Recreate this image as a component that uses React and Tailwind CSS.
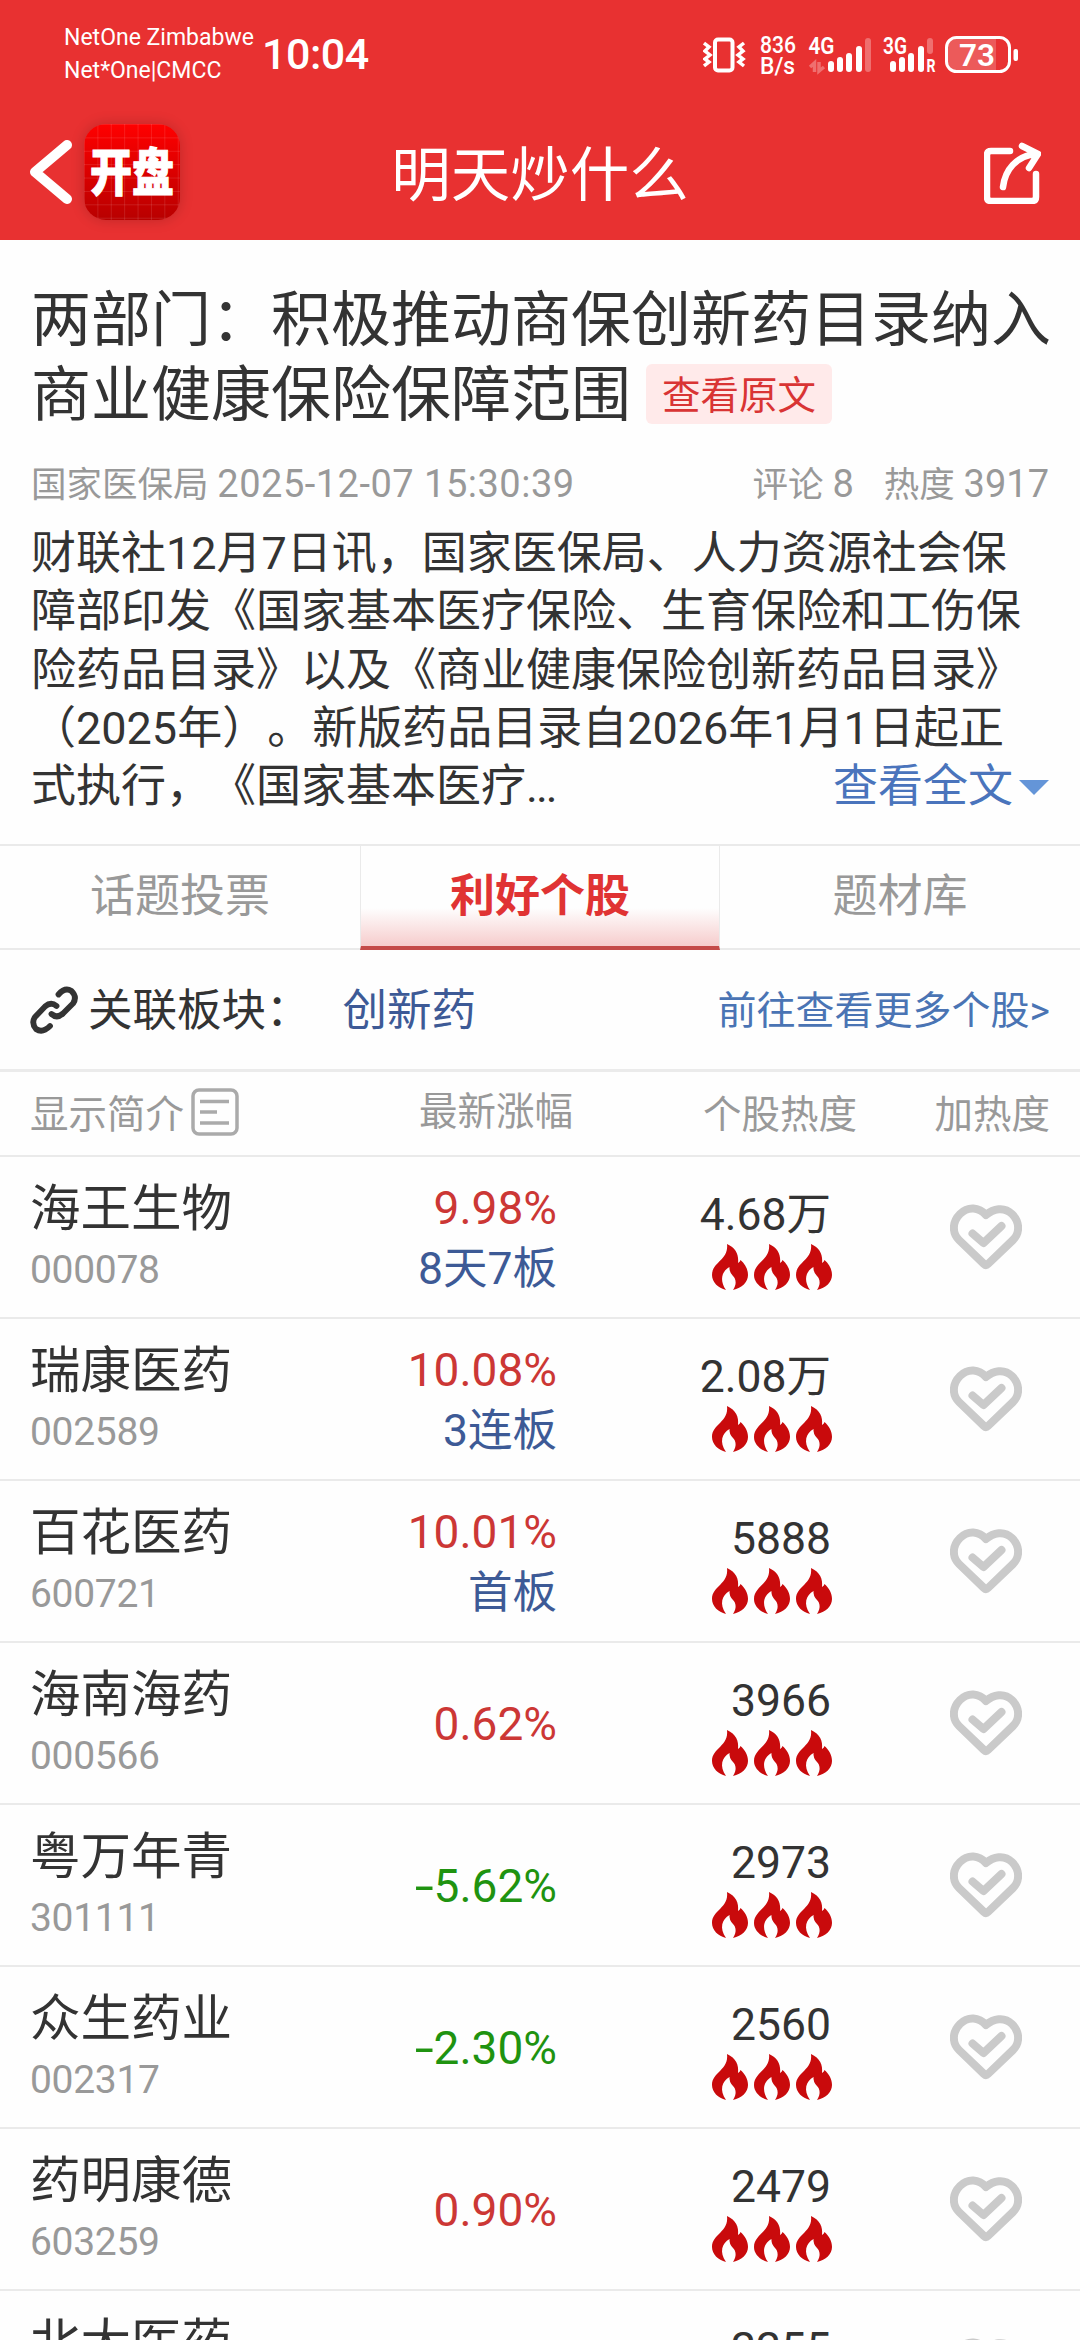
import clsx from "clsx";

const stocks = [
  { name: "海王生物", code: "000078", change: "9.98%", board: "8天7板", heat: "4.68万" },
  { name: "瑞康医药", code: "002589", change: "10.08%", board: "3连板", heat: "2.08万" },
  { name: "百花医药", code: "600721", change: "10.01%", board: "首板", heat: "5888" },
  { name: "海南海药", code: "000566", change: "0.62%", heat: "3966" },
  { name: "粤万年青", code: "301111", change: "-5.62%", heat: "2973" },
  { name: "众生药业", code: "002317", change: "-2.30%", heat: "2560" },
  { name: "药明康德", code: "603259", change: "0.90%", heat: "2479" },
  { name: "北大医药", code: "000788", change: "", heat: "2255" },
];

const summary = [
  "财联社12月7日讯，国家医保局、人力资源社会保",
  "障部印发《国家基本医疗保险、生育保险和工伤保",
  "险药品目录》以及《商业健康保险创新药品目录》",
  "（2025年）。新版药品目录自2026年1月1日起正",
];

const tabs = ["话题投票", "利好个股", "题材库"];

const Flame = () => (
  <svg viewBox="0 0 36 46" className="h-[46px] w-9" fill="#c90a0c">
    <path d="M15 0C24 4 27 11 26 19Q28 18 28.500 16C33 20 36 25 36 31C36 38 30 44 21 46C25 40 24 35 21 32Q17 28 17.500 23C10 27 7 36 14 46C6 44 0 38 0 31C0 18 17 16 15 0Z" />
  </svg>
);

const Heart = () => (
  <svg viewBox="0 0 72 66" className="h-[66px] w-[72px]" fill="none" stroke="#cacaca" strokeWidth="8" strokeLinejoin="round" strokeLinecap="round">
    <path d="M36 11C29 3 18 2 10 10C2 18 2 29 9 36L34 60Q36 62 38 60L63 36C70 29 70 18 62 10C54 2 43 5 36 11Z" />
    <path d="M22.500 29.500L33.500 39L51.500 22" />
  </svg>
);

const StatusBar = () => (
  <div className="flex h-[106px] items-center pt-1 pr-[61px] pl-16 text-white">
    <div className="w-[198px] whitespace-nowrap pb-[2px] text-[23px] leading-[33px]">
      <p>NetOne Zimbabwe</p>
      <p>Net*One|CMCC</p>
    </div>
    <span className="pb-[2px] text-[43px] font-medium tracking-[-0.5px]">10:04</span>
    <svg viewBox="703 30 316 48" className="ml-auto h-12 w-[316px]" fill="#fff">
      <rect x="715" y="38.500" width="17.500" height="31" rx="3" fill="none" stroke="#fff" strokeWidth="4" />
      <path d="M704 42l5 4-4 4 5 4-5 4 4 3-5 4M744 42l-5 4 4 4-5 4 5 4-4 3 5 4" fill="none" stroke="#fff" strokeWidth="3.500" />
      <text x="760" y="52" fontSize="23" fontWeight="500" textLength="36" lengthAdjust="spacingAndGlyphs">836</text>
      <text x="760" y="73" fontSize="23" fontWeight="500" textLength="35" lengthAdjust="spacingAndGlyphs">B/s</text>
      <text x="808.500" y="53" fontSize="23" fontWeight="600" textLength="26" lengthAdjust="spacingAndGlyphs">4G</text>
      <path d="M810 66l4.500-4v9M819 61v9l5-4" fill="none" stroke="#fff" strokeWidth="3.500" opacity=".3" />
      <rect x="828" y="60" width="6" height="11" rx="3" />
      <rect x="837" y="56" width="6" height="15" rx="3" />
      <rect x="846" y="52" width="6" height="19" rx="3" />
      <rect x="856" y="45" width="6" height="26" rx="3" />
      <rect x="865" y="37" width="6" height="34" rx="3" opacity=".3" />
      <text x="883" y="53" fontSize="23" fontWeight="600" textLength="24" lengthAdjust="spacingAndGlyphs">3G</text>
      <rect x="890" y="60" width="6" height="11" rx="3" />
      <rect x="899" y="56" width="6" height="15" rx="3" />
      <rect x="908" y="52" width="6" height="19" rx="3" />
      <rect x="918" y="45" width="6" height="26" rx="3" />
      <rect x="927" y="37" width="6" height="16" rx="3" opacity=".3" />
      <text x="926.500" y="70.500" fontSize="19" fontWeight="700" textLength="9" lengthAdjust="spacingAndGlyphs">R</text>
      <rect x="946.500" y="36.500" width="63" height="34" rx="10" fill="none" stroke="#fff" strokeWidth="3" />
      <path d="M996 38H956a8 8 0 0 0-8 8v15a8 8 0 0 0 8 8h40Z" opacity=".2" />
      <text x="959" y="65" fontSize="32" fontWeight="600" textLength="36" lengthAdjust="spacingAndGlyphs">73</text>
      <rect x="1013.500" y="48" width="4.500" height="12" rx="2" />
    </svg>
  </div>
);

const AppLogo = () => (
  <div className="flex h-24 w-24 items-center justify-center rounded-[22px] bg-[linear-gradient(#ffffff1c_1px,transparent_1px),linear-gradient(90deg,#ffffff1c_1px,transparent_1px),linear-gradient(#ff0000,#b80000)] bg-[size:13.4px_13.4px,13.4px_13.4px,100%_100%] shadow-[0_0_14px_#0000002e]">
    <svg viewBox="0 0 96 96" className="h-24 w-24">
      <text x="6" y="67" fontSize="51" fontWeight="900" fill="#fff" stroke="#fff" strokeWidth="1" textLength="84" lengthAdjust="spacingAndGlyphs">开盘</text>
    </svg>
  </div>
);

const NavBar = () => (
  <div className="flex h-[134px] items-center justify-between pr-[39px] pb-[2px] pl-[29px] text-white">
    <div className="flex w-[220px] items-center gap-3">
      <svg viewBox="0 0 43 64" className="h-16 w-[43px]" fill="none" stroke="#fff" strokeWidth="10" strokeLinecap="round" strokeLinejoin="round">
        <path d="M38 5L6 32L38 59" />
      </svg>
      <AppLogo />
    </div>
    <h1 className="pt-[9px] text-[59.500px]">明天炒什么</h1>
    <div className="flex w-[210px] justify-end pt-[2px]">
      <svg viewBox="0 0 57 62" className="h-[62px] w-[57px]" fill="none" stroke="#fff" strokeWidth="6.500" strokeLinecap="round" strokeLinejoin="round">
        <path d="M26 9H7Q3 9 3 13V55Q3 59 7 59H48Q52 59 52 55V32" />
        <path d="M19 45C21 28 32 14 52 12M38 4L54 12L45 26" />
      </svg>
    </div>
  </div>
);

const Article = () => (
  <article className="h-[604px] px-[31px] pt-[43px]">
    <h2 className="text-[60px] leading-[75px] whitespace-nowrap">
      两部门：积极推动商保创新药目录纳入
      <span className="flex items-center">
        商业健康保险保障范围
        <span className="-mt-1 ml-[15px] h-[60px] rounded-md bg-[#ffeaea] px-4 pt-[2px] text-[38.500px] leading-[60px] text-[#d93434]">查看原文</span>
      </span>
    </h2>
    <div className="mt-[25px] flex items-center justify-between text-[35.500px] leading-[52px] text-[#999]">
      <span>
        国家医保局 <span className="text-[38px] tracking-[0.5px]">2025-12-07 15:30:39</span>
      </span>
      <span className="flex gap-[30px]">
        <span>评论 <span className="text-[38px]">8</span></span>
        <span>热度 <span className="text-[38px]">3917</span></span>
      </span>
    </div>
    <div className="mt-[14px] text-[45px] leading-[58.300px] whitespace-nowrap">
      {summary.map((line) => (
        <p key={line} className="last-of-type:tracking-normal">{line}</p>
      ))}
      <p className="flex items-center justify-between">
        <span>式执行，《国家基本医疗<span className="tracking-[-2px]">...</span></span>
        <a className="flex items-center gap-[6px] text-[#4a74bc]">
          查看全文
          <svg viewBox="0 0 30 15" className="h-[15px] w-[30px]" fill="#6495d8">
            <path d="M0 0H30L15 15Z" />
          </svg>
        </a>
      </p>
    </div>
  </article>
);

const Tabs = () => (
  <nav className="grid h-[106px] grid-cols-3 border-t-2 border-[#eaeaea] text-[45px]">
    {tabs.map((tab, i) => (
      <button
        key={tab}
        className={clsx(
          "flex items-center justify-center",
          i === 1
            ? "border-x border-b-4 border-x-[#eaeaea] border-b-[#c44a48] bg-linear-to-b from-transparent from-62% to-[#f6cccc] pt-[2px] font-bold text-[#e03333]"
            : "border-b-2 border-[#eaeaea] text-[#999]"
        )}
      >
        {tab}
      </button>
    ))}
  </nav>
);

const RelatedSector = () => (
  <div className="flex h-[122px] items-center border-b-3 border-[#ebebeb] px-[30px] text-[44.500px]">
    <svg viewBox="0 0 48 48" className="h-12 w-12" fill="none" stroke="#333" strokeWidth="5.800" strokeLinecap="round">
      <path d="M28.500 8.500Q35 1 41.500 5Q47.500 11 43 17.500L33 27.500Q27 33 21.500 28" />
      <path d="M26.500 20Q21 15.500 15 20.500L5 31Q1 37 6 43Q12.500 47.500 20 40" />
    </svg>
    <span className="ml-[10px] pt-1">关联板块：</span>
    <span className="ml-[32px] pt-1 text-[#3d5a96]">创新药</span>
    <a className="ml-auto pt-1 text-[39px] text-[#4a74b4]">前往查看更多个股&gt;</a>
  </div>
);

const TableHead = () => (
  <div className="grid h-[85px] grid-cols-[573px_284px_1fr] items-center border-b-2 border-[#eaeaea] pr-[30px] text-[38.500px] text-[#999]">
    <div className="flex items-center justify-between pl-[30px]">
      <span className="flex items-center gap-[7px]">
        <span className="pt-[2px]">显示简介</span>
        <svg viewBox="0 0 48 48" className="-mt-1 h-12 w-12" fill="none" stroke="#aaa" strokeWidth="3.500">
          <rect x="2" y="2" width="44" height="44" rx="6" />
          <path d="M9 13.500H38M9 24H26M9 35H38" />
        </svg>
      </span>
      <span className="pb-[3px]">最新涨幅</span>
    </div>
    <span className="pt-[2px] text-right">个股热度</span>
    <span className="pt-[2px] text-right">加热度</span>
  </div>
);

const Change = ({ value }) => {
  const down = value.startsWith("-");

  return (
    <p className={clsx("text-[46px]", down ? "text-[#1f9310]" : "text-[#cc3735]")}>
      {down && <span className="inline-block origin-right scale-x-150">-</span>}
      {down ? value.slice(1) : value}
    </p>
  );
};

const StockRow = ({ stock }) => (
  <li className="grid h-[162px] grid-cols-[360px_197px_275px_1fr] items-center border-b-2 border-[#eaeaea]">
    <div className="pt-1 pl-[30px]">
      <p className="text-[50.500px] leading-[62px]">{stock.name}</p>
      <p className="text-[39px] leading-[60px] tracking-[-0.3px] text-[#999]">{stock.code}</p>
    </div>
    <div className="pt-[3px] text-right text-[44.500px] leading-[61px]">
      <Change value={stock.change} />
      {stock.board && <p className="text-[#3d5a96]">{stock.board}</p>}
    </div>
    <div className="flex flex-col items-end">
      <p className="pt-[2px] pr-px text-[44.500px] leading-[58px]">{stock.heat}</p>
      <div className="flex gap-[6px]">
        <Flame />
        <Flame />
        <Flame />
      </div>
    </div>
    <div className="pl-[118px]">
      <Heart />
    </div>
  </li>
);

const App = () => {
  return (
    <div className="h-[2340px] w-[1080px] overflow-hidden bg-[#fefefe] font-['Roboto','Noto_Sans_CJK_SC',sans-serif] text-[#333] [text-spacing-trim:space-all]">
      <header className="h-60 bg-[#e83131]">
        <StatusBar />
        <NavBar />
      </header>
      <Article />
      <Tabs />
      <RelatedSector />
      <TableHead />
      <ul>
        {stocks.map((stock) => (
          <StockRow key={stock.code} stock={stock} />
        ))}
      </ul>
    </div>
  );
};

export default App;
